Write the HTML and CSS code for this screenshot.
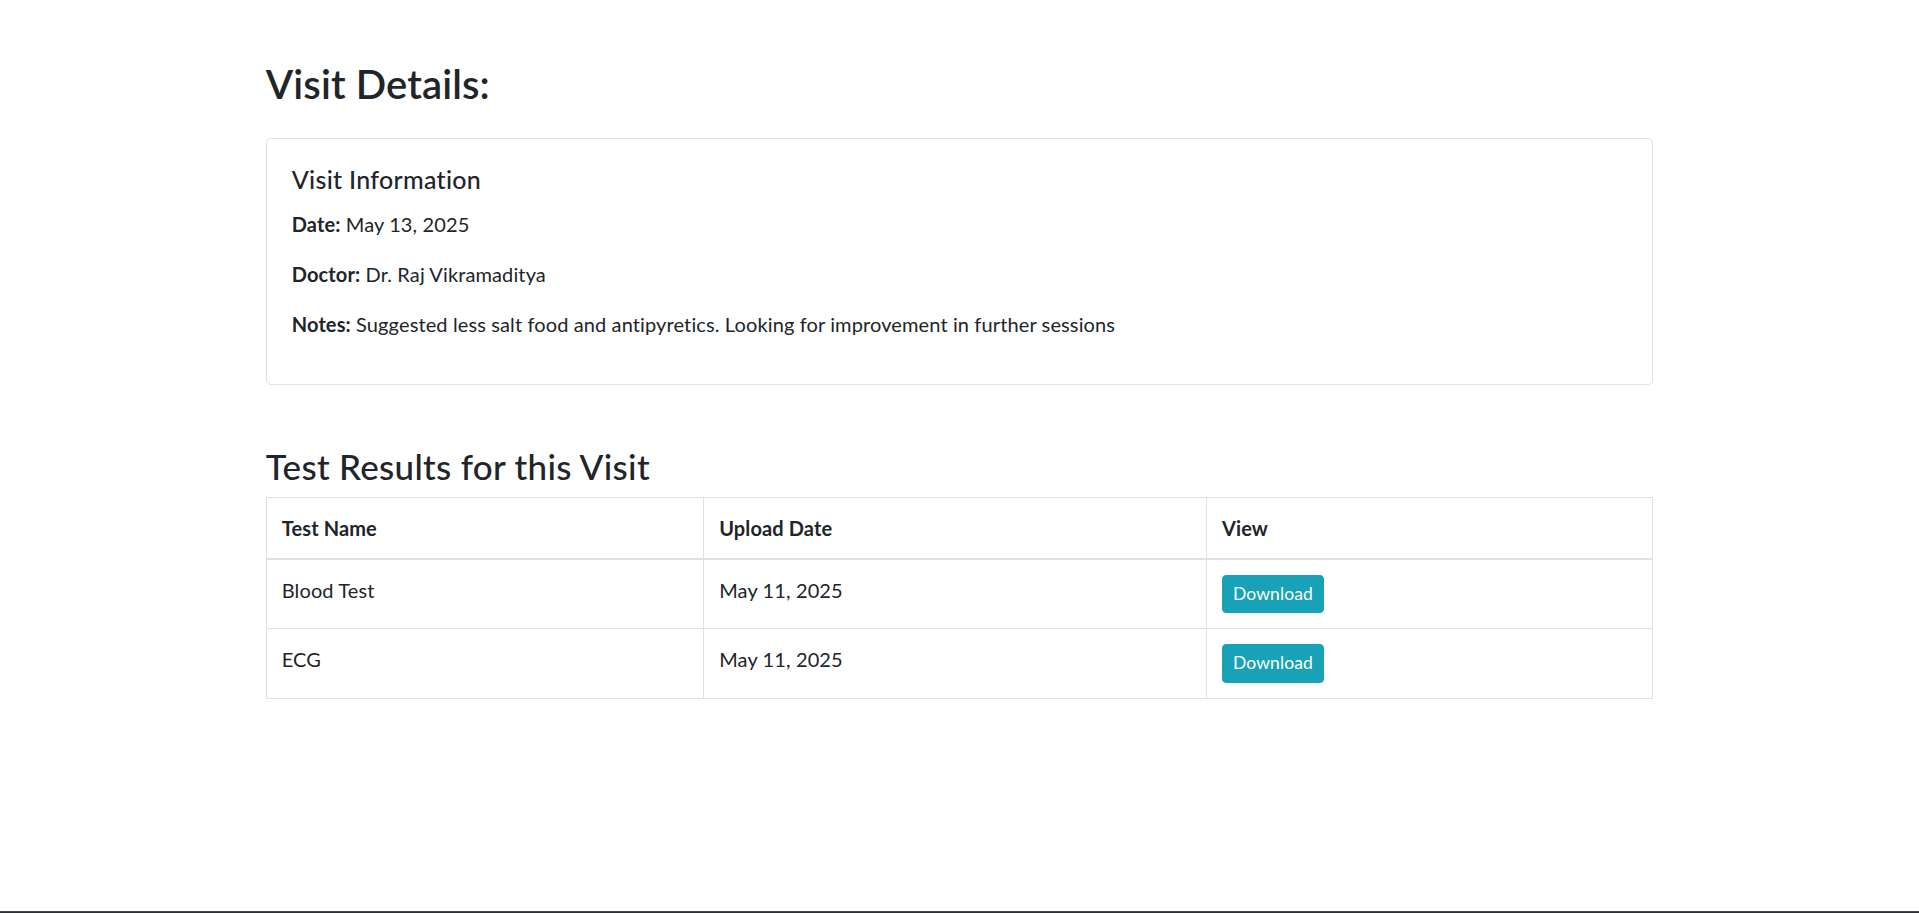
FILE: index.html
```html
<!DOCTYPE html>
<html lang="en">
<head>
<meta charset="utf-8">
<title>Visit Details</title>
<link rel="stylesheet" href="styles.css">
</head>
<body>
<div class="page">
  <main class="container">
    <h2 class="page-title">Visit Details:</h2>
    <section class="card">
      <div class="card-body">
        <h5 class="card-title">Visit Information</h5>
        <p class="info-row"><strong>Date:</strong> May 13, 2025</p>
        <p class="info-row"><strong>Doctor:</strong> Dr. Raj Vikramaditya</p>
        <p class="info-row"><strong>Notes:</strong> Suggested less salt food and antipyretics. Looking for improvement in further sessions</p>
      </div>
    </section>
    <h3 class="section-title">Test Results for this Visit</h3>
    <table class="results">
      <thead>
        <tr>
          <th class="col-name">Test Name</th>
          <th class="col-date">Upload Date</th>
          <th class="col-view">View</th>
        </tr>
      </thead>
      <tbody>
        <tr>
          <td>Blood Test</td>
          <td>May 11, 2025</td>
          <td><a class="btn-download" href="#">Download</a></td>
        </tr>
        <tr>
          <td>ECG</td>
          <td>May 11, 2025</td>
          <td><a class="btn-download" href="#">Download</a></td>
        </tr>
      </tbody>
    </table>
  </main>
</div>
<footer class="footer"></footer>
</body>
</html>
```
FILE: styles.css
```css
* { box-sizing: border-box; }
html, body { margin: 0; padding: 0; }
body {
  font-family: "Lato", "Noto Sans", sans-serif;
  font-size: 20px;
  line-height: 1.5;
  letter-spacing: 0.12px;
  color: #212529;
  background: #fff;
}
.page {
  min-height: calc(100vh - 2px);
}
.container {
  width: 1425px;
  margin: 0 auto;
  padding: 60px 18.75px 0;
}
h2, h3, h5 {
  margin: 0 0 10px;
  font-weight: 500;
  line-height: 1.2;
}
.page-title {
  font-size: 40px;
  font-weight: 600;
  margin-bottom: 30px;
}
.card {
  border: 1px solid rgba(0,0,0,.125);
  border-radius: 5px;
}
.card-body {
  padding: 25px;
}
.card-title {
  font-size: 25px;
  letter-spacing: 0.3px;
  margin-bottom: 15px;
}
.info-row {
  margin: 0 0 20px;
}
.info-row strong { font-weight: 700; }
.section-title {
  font-size: 35px;
  letter-spacing: 0.3px;
  margin-top: 60px;
}
.results {
  width: 100%;
  border-collapse: collapse;
  table-layout: fixed;
  border: 1px solid #dee2e6;
  margin-bottom: 20px;
}
.results th, .results td {
  padding: 15px;
  border: 1px solid #dee2e6;
  text-align: left;
  vertical-align: top;
}
.results th {
  font-weight: 700;
  border-bottom-width: 2px;
}
.col-name { width: 31.55%; }
.col-date { width: 36.26%; }
.btn-download {
  display: inline-block;
  font-size: 17.5px;
  line-height: 1.5;
  padding: 5px 10px;
  color: #fff;
  background: #17a2b8;
  border: 1px solid #17a2b8;
  border-radius: 4px;
  text-decoration: none;
  vertical-align: middle;
}
.footer {
  height: 2px;
  background: #2b3035;
  border-top: 1px solid #3d444b;
}
```
